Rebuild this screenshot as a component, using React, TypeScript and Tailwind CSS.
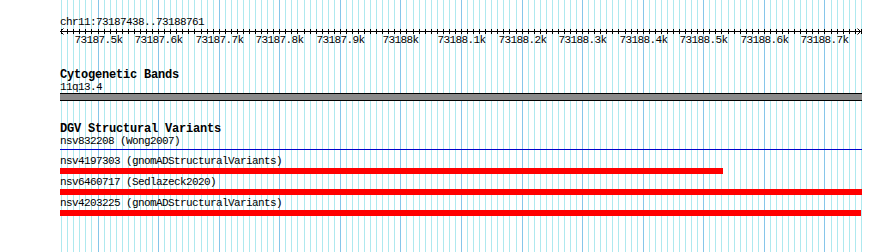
import React from "react";

const START = 73187438;
const END = 73188761;
const LEFT = 60;
const WIDTH = 802;
const SCALE = WIDTH / (END - START + 1);

const px = (bp: number) => Math.round((bp - START) * SCALE);

const gridBps: number[] = [];
for (let bp = 73187440; bp <= 73188760; bp += 10) gridBps.push(bp);

const majorBps: number[] = [];
for (let bp = 73187500; bp <= 73188700; bp += 100) majorBps.push(bp);

const label = (bp: number) => {
  const k = bp / 1000;
  return (Number.isInteger(k) ? String(k) : k.toFixed(1)) + "k";
};

function Grid() {
  return (
    <svg className="absolute left-0 top-0" width={890} height={252}>
      {gridBps.map((bp) => (
        <rect
          key={bp}
          x={LEFT + px(bp)}
          y={0}
          width={1}
          height={252}
          fill={bp % 100 === 0 ? "#86c6ea" : "#aee9ef"}
        />
      ))}
    </svg>
  );
}

function Ruler() {
  return (
    <svg className="block overflow-visible" width={WIDTH} height={18}>
      <rect x={0} y={3} width={WIDTH - 1} height={1} fill="#000" />
      {gridBps.map((bp) => (
        <rect key={bp} x={px(bp)} y={1} width={1} height={5} fill="#000" />
      ))}
      <path d="M0.5 3.5 L3.5 0.5 M0.5 3.5 L3.5 6.5" stroke="#000" strokeWidth={1} fill="none" />
      <path d={`M${WIDTH - 1.5} 3.5 L${WIDTH - 4.5} 0.5 M${WIDTH - 1.5} 3.5 L${WIDTH - 4.5} 6.5`} stroke="#000" strokeWidth={1} fill="none" />
      {majorBps.map((bp) => (
        <text
          key={bp}
          x={px(bp) + 0.5}
          y={15}
          textAnchor="middle"
          fontFamily="'Liberation Mono', monospace"
          fontSize={11}
          letterSpacing={-0.6}
          fill="#000"
        >
          {label(bp)}
        </text>
      ))}
    </svg>
  );
}

const txt = "h-[12px] text-[11px] leading-[12px] tracking-[-0.6px] whitespace-pre text-black";
const title = "h-[12px] text-[12px] leading-[12px] tracking-[-0.2px] font-bold whitespace-pre text-black";

export default function App() {
  return (
    <div className="relative w-[890px] h-[252px] bg-white overflow-hidden font-['Liberation_Mono',monospace]">
      <Grid />
      <div className="relative ml-[60px] w-[802px] flex flex-col">
        <div className="h-[16px]" />
        <div className={txt}>chr11:73187438..73188761</div>
        <Ruler />
        <div className="h-[23px]" />
        <div className={title}>Cytogenetic Bands</div>
        <div className={txt}>11q13.4</div>
        <div className="h-[8px] bg-[#8a8a8a] border-y border-black" />
        <div className="h-[22px]" />
        <div className={title}>DGV Structural Variants</div>
        <div className={txt}>nsv832208 (Wong2007)</div>
        <div className="mt-[2px] h-[1px] bg-[#0000cc]" />
        <div className={`mt-[5px] ${txt}`}>nsv4197303 (gnomADStructuralVariants)</div>
        <div className="mt-[1px] h-[6px] w-[663px] bg-[#ff0000]" />
        <div className={`mt-[2px] ${txt}`}>nsv6460717 (Sedlazeck2020)</div>
        <div className="mt-[1px] h-[6px] w-[802px] bg-[#ff0000]" />
        <div className={`mt-[2px] ${txt}`}>nsv4203225 (gnomADStructuralVariants)</div>
        <div className="mt-[1px] h-[6px] w-[801px] bg-[#ff0000]" />
      </div>
    </div>
  );
}
